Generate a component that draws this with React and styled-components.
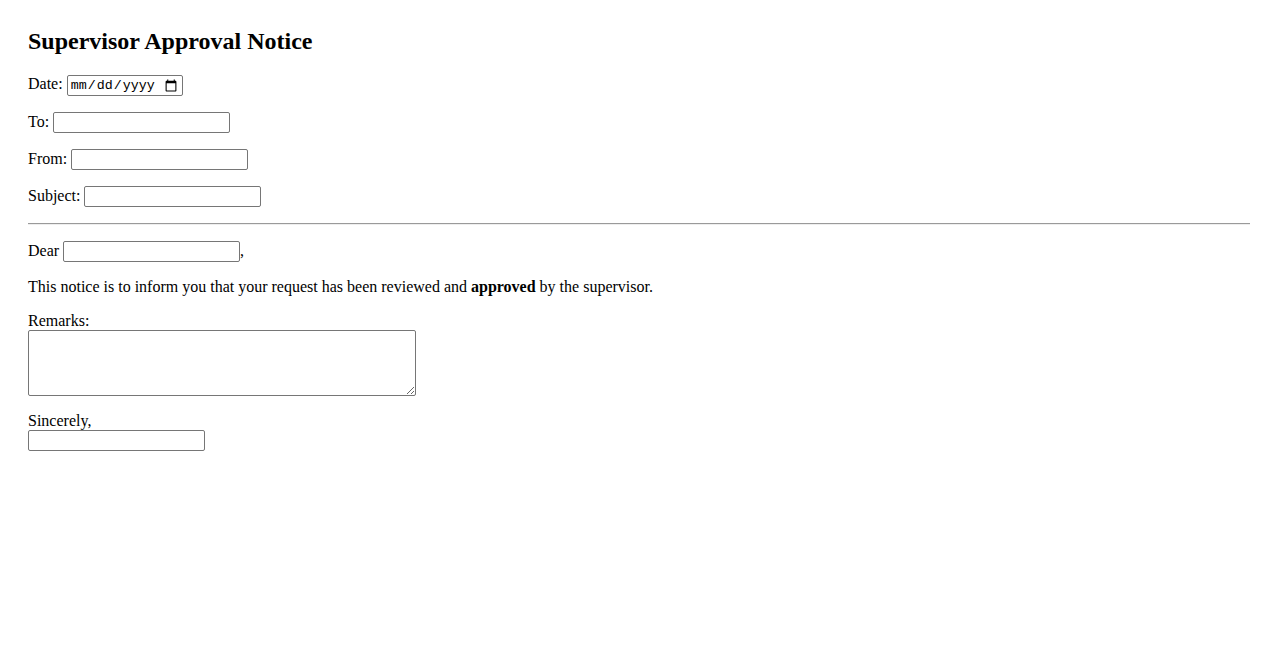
import React from 'react'
import styled, { createGlobalStyle } from 'styled-components'

const GlobalStyle = createGlobalStyle`
  body {
    margin: 0;
    background: #fff;
    color: #000;
    font-family: "Liberation Serif", "Times New Roman", serif;
    font-size: 16px;
  }
`

const Page = styled.div`
  padding: 28px;
`

const Title = styled.h2`
  font-size: 24px;
  font-weight: bold;
  margin: 0 0 19.92px;
`

const Field = styled.p`
  margin: 16px 0;
  line-height: normal;
`

const Box = styled.input`
  box-sizing: border-box;
  width: ${p => p.$width || 177}px;
  height: 21px;
  padding: 1px 2px;
  border: 1px solid #767676;
  border-radius: 2px;
  font-family: ${p => (p.type === 'date' ? '"Liberation Mono", monospace' : 'Arial, sans-serif')};
  font-size: 13.333px;
  vertical-align: baseline;
  background: #fff;
  color: #000;
`

const Divider = styled.hr`
  margin: 8px 0;
  border: none;
  border-top: 1px solid #9a9a9a;
  border-bottom: 1px solid #eee;
`

const Message = styled.p`
  margin: 16px 0;
`

const Stack = styled.div`
  margin: 16px 0;
`

const Remarks = styled.textarea`
  box-sizing: border-box;
  display: block;
  width: 388px;
  height: 66px;
  padding: 2px;
  border: 1px solid #767676;
  border-radius: 2px;
  font-family: "Liberation Mono", monospace;
  font-size: 13.333px;
`

const Signature = styled(Box)`
  display: block;
`

export default function App() {
  return (
    <Page>
      <GlobalStyle />
      <Title>Supervisor Approval Notice</Title>
      <Field>
        <label>Date: </label>
        <Box type="date" $width={116} />
      </Field>
      <Field>
        <label>To: </label>
        <Box type="text" />
      </Field>
      <Field>
        <label>From: </label>
        <Box type="text" />
      </Field>
      <Field>
        <label>Subject: </label>
        <Box type="text" />
      </Field>
      <Divider />
      <Field>
        Dear <Box type="text" />,
      </Field>
      <Message>
        This notice is to inform you that your request has been reviewed and <b>approved</b> by the supervisor.
      </Message>
      <Stack>
        <label>Remarks:</label>
        <Remarks rows={4} />
      </Stack>
      <Stack>
        <div>Sincerely,</div>
        <Signature type="text" />
      </Stack>
    </Page>
  )
}
